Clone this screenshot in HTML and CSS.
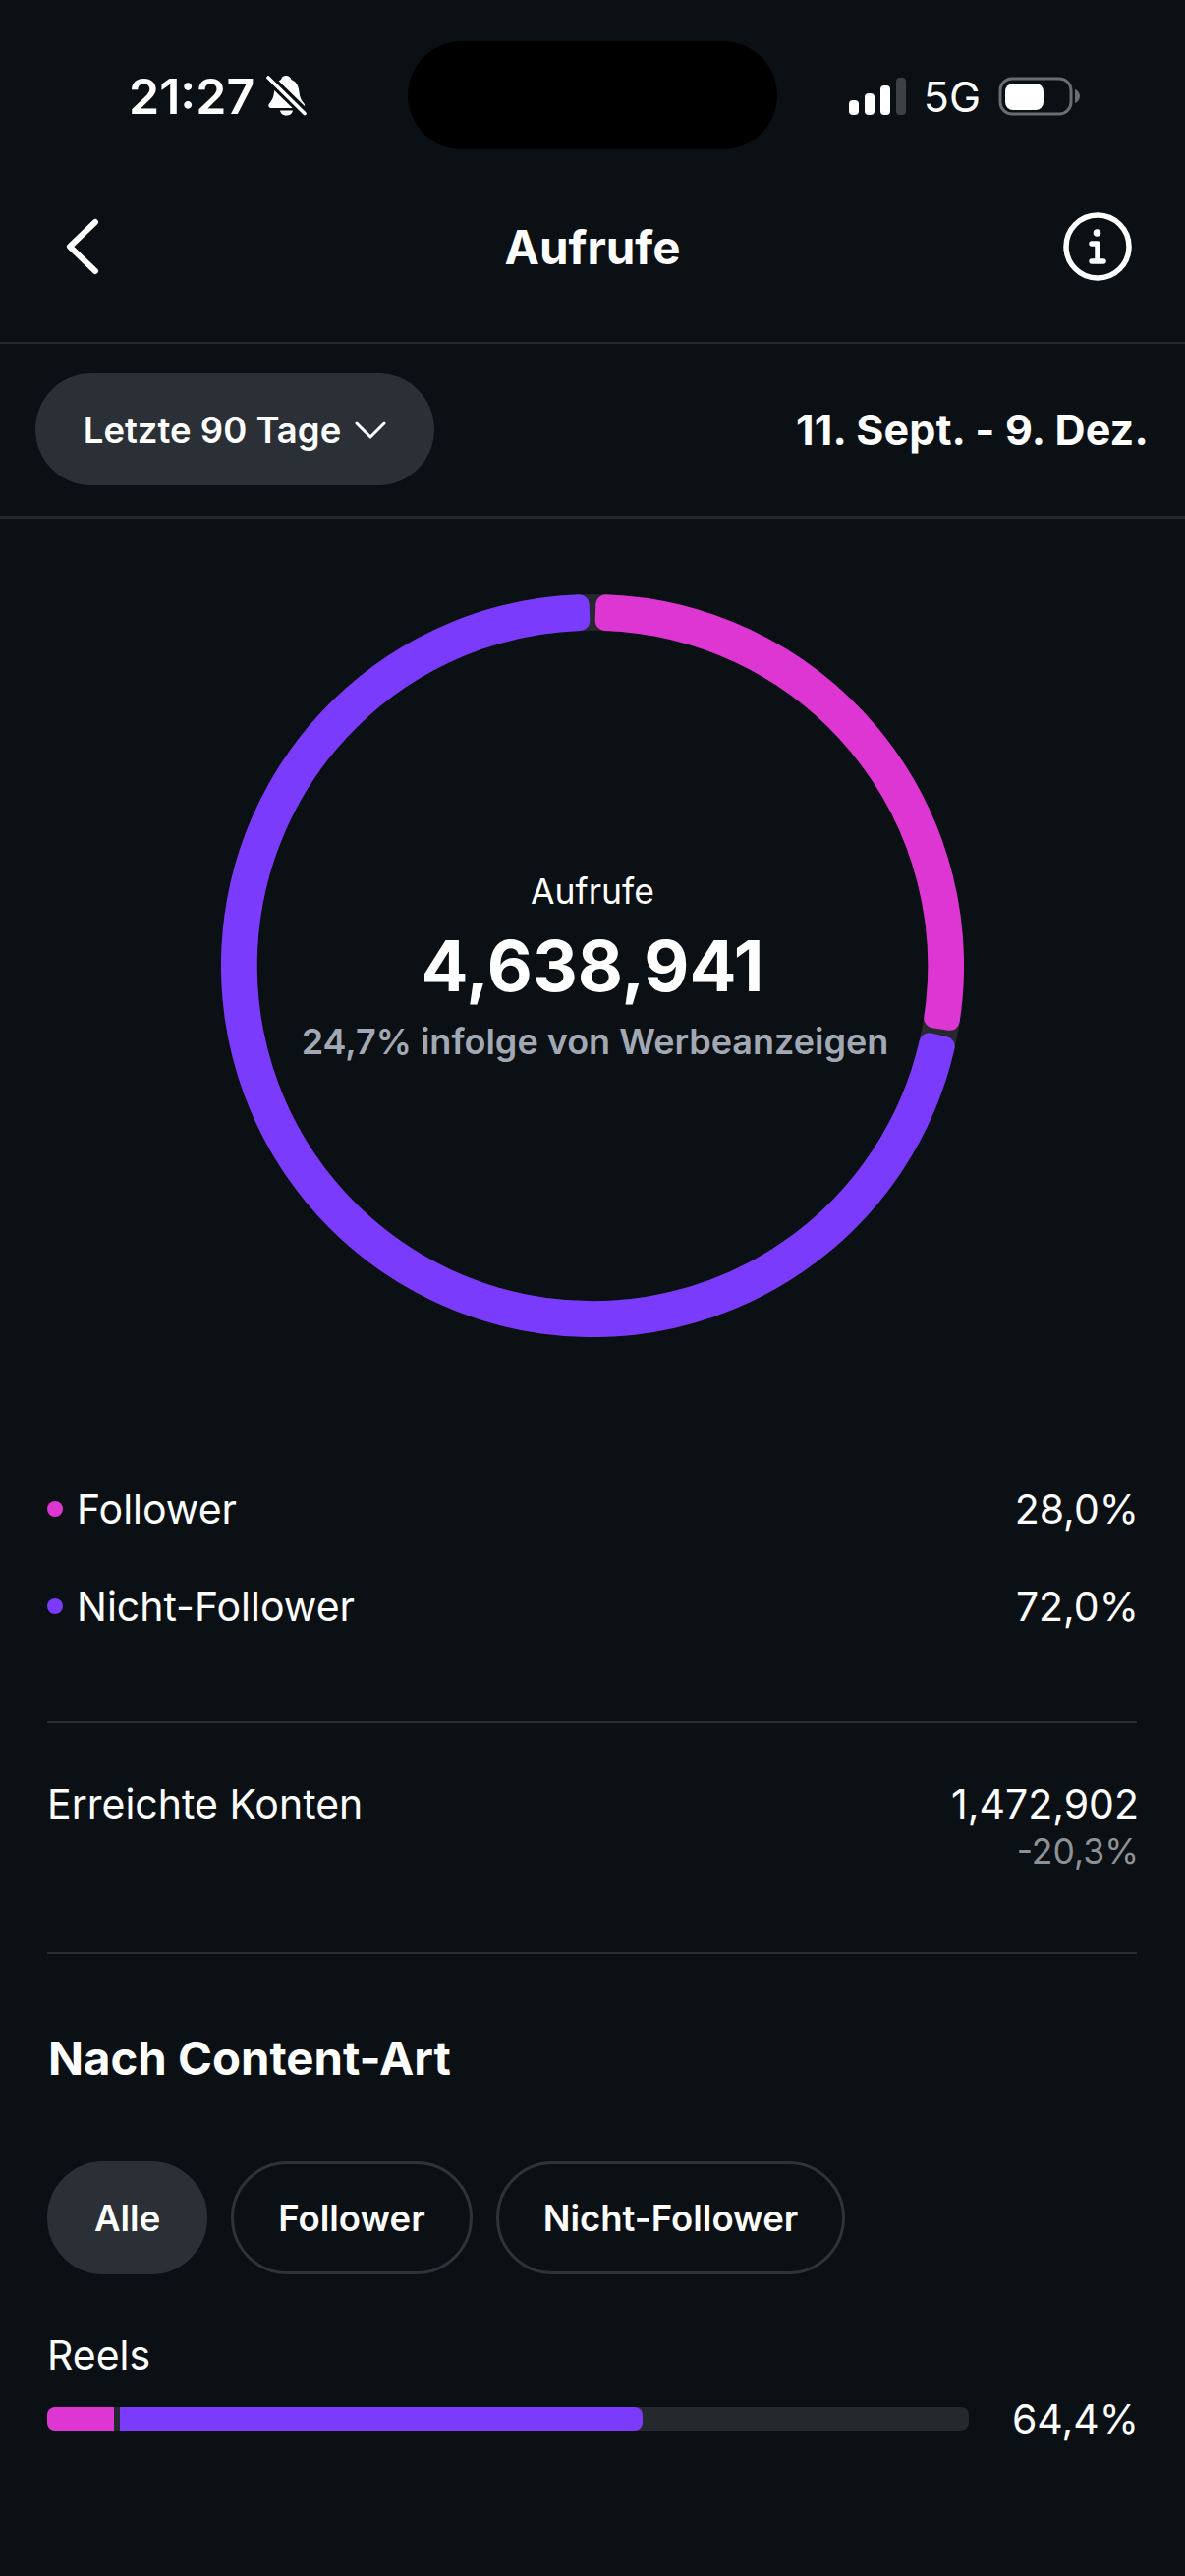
FILE: index.html
```html
<!DOCTYPE html>
<html lang="de">
<head>
<meta charset="utf-8">
<title>Aufrufe</title>
<link rel="stylesheet" href="styles.css">
</head>
<body>
<div class="screen">
  <div class="island"></div>
  <header class="status">
    <div class="status-left">
      <span class="time">21:27</span>
      <svg class="bell" width="42" height="44" viewBox="0 0 42 44">
        <path d="M20 1c3 0 5 2 5.500 4C31 7 33 12 33.500 18c.5 5 2 8 5 11.500 1.500 2 .5 4.500-2 4.500H5c-2.500 0-3.500-2.500-2-4.500 3-3.500 4.500-6.500 5-11.500C8.500 12 10 7 15 5c.5-2 2-4 5-4z" fill="#fff"/>
        <path d="M14 36.500h13c-.5 3-3 5-6.500 5s-6-2-6.500-5z" fill="#fff"/>
        <path d="M0 1 41 41" stroke="#0b1014" stroke-width="10"/>
        <path d="M2 3 39 39.500" stroke="#fff" stroke-width="3.600" stroke-linecap="round"/>
      </svg>
    </div>
    <div class="status-right">
      <svg class="signal" width="58" height="38" viewBox="0 0 58 38">
        <rect x="0" y="23" width="10" height="15" rx="4" fill="#fff"/>
        <rect x="16" y="16" width="10" height="22" rx="4" fill="#fff"/>
        <rect x="32" y="8" width="10" height="30" rx="4" fill="#fff"/>
        <rect x="48" y="0" width="10" height="38" rx="4" fill="#3d4144"/>
      </svg>
      <span class="net">5G</span>
      <svg class="battery" width="84" height="40" viewBox="0 0 84 40">
        <rect x="2" y="2" width="72" height="36" rx="12" fill="none" stroke="#6a6d70" stroke-width="3"/>
        <rect x="7" y="7" width="39" height="27" rx="8" fill="#fff"/>
        <path d="M78 13c3 1 5 4 5 7s-2 6-5 7z" fill="#6a6d70"/>
      </svg>
    </div>
  </header>

  <nav class="nav">
    <svg class="back" width="36" height="60" viewBox="0 0 36 60">
      <path d="M31 5 5 30l26 25" fill="none" stroke="#fff" stroke-width="6" stroke-linecap="round" stroke-linejoin="round"/>
    </svg>
    <h1 class="title">Aufrufe</h1>
    <svg class="info" width="70" height="70" viewBox="0 0 70 70">
      <circle cx="35" cy="35" r="32" fill="none" stroke="#fff" stroke-width="5.500"/>
      <circle cx="34.500" cy="21" r="3.800" fill="#fff"/>
      <path d="M29 32h6v17.500M29 50h12" fill="none" stroke="#fff" stroke-width="5.500" stroke-linecap="round" stroke-linejoin="round"/>
    </svg>
  </nav>

  <section class="filter">
    <div class="pill">
      <span>Letzte 90 Tage</span>
      <svg width="32" height="18" viewBox="0 0 32 18">
        <path d="M2 2l14 14L30 2" fill="none" stroke="#fff" stroke-width="3" stroke-linecap="round" stroke-linejoin="round"/>
      </svg>
    </div>
    <div class="range">11. Sept. - 9. Dez.</div>
  </section>

  <section class="ring">
    <svg class="ring-svg" width="756" height="756" viewBox="0 0 756 756">
      <circle cx="378" cy="378" r="359.650" fill="none" stroke="#25282d" stroke-width="36.700"/>
      <path class="seg-pink" d="M391.290 10.240A368 368 0 0 1 741.740 433.850L725.230 431.320A351.300 351.300 0 0 0 390.690 26.930Z"/>
      <path class="seg-purple" d="M736.750 459.980A368 368 0 1 1 364.710 10.240L365.310 26.930A351.300 351.300 0 1 0 720.470 456.260Z"/>
    </svg>
    <div class="ring-text">
      <div class="ring-label">Aufrufe</div>
      <div class="ring-number">4,638,941</div>
      <div class="ring-sub">24,7% infolge von Werbeanzeigen</div>
    </div>
  </section>

  <section class="legend">
    <div class="row">
      <span class="key"><i class="dot dot-pink"></i>Follower</span>
      <span class="val">28,0%</span>
    </div>
    <div class="row">
      <span class="key"><i class="dot dot-purple"></i>Nicht-Follower</span>
      <span class="val">72,0%</span>
    </div>
  </section>

  <section class="reach">
    <span>Erreichte Konten</span>
    <div class="reach-values val">
      <div>1,472,902</div>
      <div class="delta">-20,3%</div>
    </div>
  </section>

  <section class="content">
    <h2 class="heading">Nach Content-Art</h2>
    <div class="chips">
      <span class="chip chip-active">Alle</span>
      <span class="chip">Follower</span>
      <span class="chip">Nicht-Follower</span>
    </div>
    <div class="metric-label">Reels</div>
    <div class="metric">
      <div class="bar">
        <div class="bar-pink"></div>
        <div class="bar-purple"></div>
      </div>
      <span class="metric-value val">64,4%</span>
    </div>
  </section>
</div>
</body>
</html>
```

FILE: styles.css
```css
* { box-sizing: border-box; }
html, body { margin: 0; padding: 0; }
body {
  background: #0b1014;
  color: #fff;
  font-family: Inter, "Liberation Sans", sans-serif;
}
.screen { position: relative; width: 1206px; height: 2622px; overflow: hidden; }
.island {
  position: absolute; left: 415px; top: 42px;
  width: 376px; height: 110px;
  background: #000; border-radius: 55px;
}
.status {
  height: 176px; padding: 20px 0 0 131px;
  display: flex; align-items: center; justify-content: space-between;
}
.status-left { display: flex; align-items: center; gap: 12px; }
.time { font-size: 50px; font-weight: 600; line-height: 56px; }
.bell { display: block; }
.status-right { display: flex; align-items: center; margin-right: 106px; }
.signal { display: block; }
.net { font-size: 43px; font-weight: 400; margin-left: 18px; line-height: 48px; }
.battery { display: block; margin-left: 18px; }

.nav {
  height: 174px; padding: 0 54px 22px 66px;
  display: grid; grid-template-columns: 1fr auto 1fr; align-items: center;
  border-bottom: 2px solid #25282d;
}
.back { display: block; }
.title { margin: 0; font-size: 47.500px; font-weight: 700; line-height: 56px; padding: 2px 12px 0 0; }
.info { display: block; justify-self: end; }

.filter {
  height: 178px; padding: 29px 37px 31px 36px;
  display: flex; align-items: center; justify-content: space-between;
  border-bottom: 3px solid #25282d;
}
.pill {
  height: 114px; width: 406px; border-radius: 57px; padding-top: 2px;
  background: #2b3036;
  display: flex; align-items: center; justify-content: center; gap: 14px;
  font-size: 36.500px; font-weight: 600;
}
.range { font-size: 43px; font-weight: 700; letter-spacing: 0.2px; }

.ring {
  margin: 77px auto 0; width: 756px; height: 756px;
  display: grid; place-items: center;
}
.ring-svg, .ring-text { grid-area: 1 / 1; }
.ring-svg { display: block; }
.seg-pink { fill: #dd36d2; stroke: #dd36d2; stroke-width: 20; stroke-linejoin: round; }
.seg-purple { fill: #7a3bfd; stroke: #7a3bfd; stroke-width: 20; stroke-linejoin: round; }
.ring-text { text-align: center; white-space: nowrap; padding-top: 2px; }
.ring-label { font-size: 35.500px; line-height: 42px; }
.ring-number { font-size: 71px; font-weight: 700; line-height: 84px; margin-top: 12px; }
.ring-sub { font-size: 36px; font-weight: 600; line-height: 42px; color: #a3a9b4; margin-top: 14px; padding-left: 5px; }

.legend {
  margin: 0 49px 0 48px; padding: 151px 0 93px;
  border-bottom: 2px solid #2b2e33;
  display: flex; flex-direction: column; gap: 51px;
  font-size: 41px;
}
.row { display: flex; justify-content: space-between; align-items: center; height: 48px; }
.key { display: flex; align-items: center; gap: 14px; }
.dot { width: 16px; height: 16px; border-radius: 50%; display: block; }
.dot-pink { background: #dd36d2; }
.dot-purple { background: #7a3bfd; }
.val { margin-right: -2px; }

.reach {
  margin: 0 49px 0 48px; padding: 58px 0 82px;
  border-bottom: 2px solid #2b2e33;
  display: flex; justify-content: space-between; align-items: flex-start;
  font-size: 41px; line-height: 48px;
}
.reach-values { text-align: right; }
.delta { font-size: 35.500px; line-height: 40px; color: #8e9196; margin-top: 5px; }

.content { padding: 78px 49px 0 48px; }
.heading { margin: 0; padding-left: 1px; font-size: 47.300px; font-weight: 700; line-height: 56px; }
.chips { display: flex; gap: 24px; margin-top: 77px; }
.chip {
  height: 115px; padding: 0 45px; border-radius: 58px;
  border: 3px solid #2f3338;
  display: flex; align-items: center;
  font-size: 36.500px; font-weight: 600;
}
.chip-active { background: #2b3036; border-color: #2b3036; }
.metric-label { font-size: 41px; line-height: 48px; margin-top: 58px; }
.metric { display: flex; align-items: center; justify-content: space-between; margin-top: 17px; }
.bar {
  width: 938px; height: 24px; border-radius: 8px;
  background: #25282d;
  display: flex; overflow: hidden;
}
.bar-pink { width: 68px; background: #dd36d2; }
.bar-purple { width: 532px; margin-left: 6px; background: #7a3bfd; border-radius: 0 8px 8px 0; }
.metric-value { font-size: 41px; line-height: 48px; }
```
